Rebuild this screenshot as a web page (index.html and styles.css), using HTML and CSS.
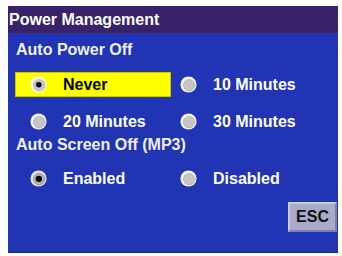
FILE: index.html
```html
<!DOCTYPE html>
<html lang="en">
<head>
  <meta charset="UTF-8" />
  <title>Power Management</title>
  <link rel="stylesheet" href="styles.css">
</head>
<body>
  <div class="screen">
    <div class="title">Power Management</div>
    <div class="content">
      <div class="label">Auto Power Off</div>
      <div class="options first">
        <div class="option selected">
          <svg class="radio" viewBox="0 0 16 16"><circle cx="8" cy="8" r="7.6" fill="#f6f6f6"/><circle cx="8.6" cy="8.6" r="5.4" fill="#c6c6c6" stroke="#8a8a8a" stroke-width="0.7" stroke-dasharray="1 0.8"/><circle cx="8.3" cy="8.3" r="2.6" fill="#000"/></svg>
          <span>Never</span>
        </div>
        <div class="option col2">
          <svg class="radio" viewBox="0 0 16 16"><circle cx="8" cy="8" r="7.6" fill="#f6f6f6"/><circle cx="8.6" cy="8.6" r="5.4" fill="#c6c6c6" stroke="#8a8a8a" stroke-width="0.7" stroke-dasharray="1 0.8"/></svg>
          <span>10 Minutes</span>
        </div>
      </div>
      <div class="options">
        <div class="option">
          <svg class="radio" viewBox="0 0 16 16"><circle cx="8" cy="8" r="7.6" fill="#f6f6f6"/><circle cx="8.6" cy="8.6" r="5.4" fill="#c6c6c6" stroke="#8a8a8a" stroke-width="0.7" stroke-dasharray="1 0.8"/></svg>
          <span>20 Minutes</span>
        </div>
        <div class="option col2">
          <svg class="radio" viewBox="0 0 16 16"><circle cx="8" cy="8" r="7.6" fill="#f6f6f6"/><circle cx="8.6" cy="8.6" r="5.4" fill="#c6c6c6" stroke="#8a8a8a" stroke-width="0.7" stroke-dasharray="1 0.8"/></svg>
          <span>30 Minutes</span>
        </div>
      </div>
      <div class="label second">Auto Screen Off (MP3)</div>
      <div class="options third">
        <div class="option">
          <svg class="radio" viewBox="0 0 16 16"><circle cx="8" cy="8" r="7.6" fill="#e8e8e8"/><circle cx="8.6" cy="8.6" r="5.4" fill="#b4b4b4" stroke="#5a5a5a" stroke-width="0.8" stroke-dasharray="1 0.8"/><circle cx="8.3" cy="8.3" r="3" fill="#000"/></svg>
          <span>Enabled</span>
        </div>
        <div class="option col2">
          <svg class="radio" viewBox="0 0 16 16"><circle cx="8" cy="8" r="7.6" fill="#f6f6f6"/><circle cx="8.6" cy="8.6" r="5.4" fill="#c6c6c6" stroke="#8a8a8a" stroke-width="0.7" stroke-dasharray="1 0.8"/></svg>
          <span>Disabled</span>
        </div>
      </div>
      <div class="actions">
        <button class="esc">ESC</button>
      </div>
    </div>
  </div>
</body>
</html>
```

FILE: styles.css
```css
body {
  margin: 0;
  background: #fff;
  font-family: 'Liberation Sans', Arial, sans-serif;
}

.screen {
  margin: 6px 0 0 8px;
  width: 330px;
  height: 246px;
  background: #2034b4;
  border-bottom: 1px solid #1a2480;
  display: flex;
  flex-direction: column;
}

.title {
  height: 27px;
  line-height: 27px;
  padding-left: 1px;
  background: #38226a;
  color: #fff;
  font-size: 16px;
  font-weight: bold;
}

.content {
  flex: 1;
  display: flex;
  flex-direction: column;
}

.label {
  margin: 7px 0 0 8px;
  height: 20px;
  line-height: 20px;
  color: #f0f0f4;
  font-size: 16px;
  font-weight: bold;
}

.label.second {
  margin-top: 1px;
}

.options {
  display: grid;
  grid-template-columns: 156px 1fr;
  margin: 12px 0 0 7px;
}

.options.third {
  margin-top: 11px;
}

.option {
  height: 25px;
  display: flex;
  align-items: center;
  padding-left: 15px;
  color: #fff;
  font-size: 16px;
  font-weight: bold;
}

.option.col2 {
  padding-left: 9px;
}

.option.selected {
  background: #ffff00;
  color: #000;
  box-shadow: inset 0 0 0 1px #c8c800;
}

.radio {
  width: 17px;
  height: 17px;
  margin-right: 16px;
  flex: none;
}

.actions {
  display: flex;
  justify-content: flex-end;
  margin-top: 11px;
  padding-right: 1px;
}

.esc {
  width: 49px;
  height: 30px;
  padding: 0;
  background: #a9abc9;
  border: 2px solid;
  border-color: #c9cbe2 #7d7fa6 #7d7fa6 #c9cbe2;
  color: #111;
  font-family: 'Liberation Sans', Arial, sans-serif;
  font-size: 16px;
  font-weight: bold;
}
```
